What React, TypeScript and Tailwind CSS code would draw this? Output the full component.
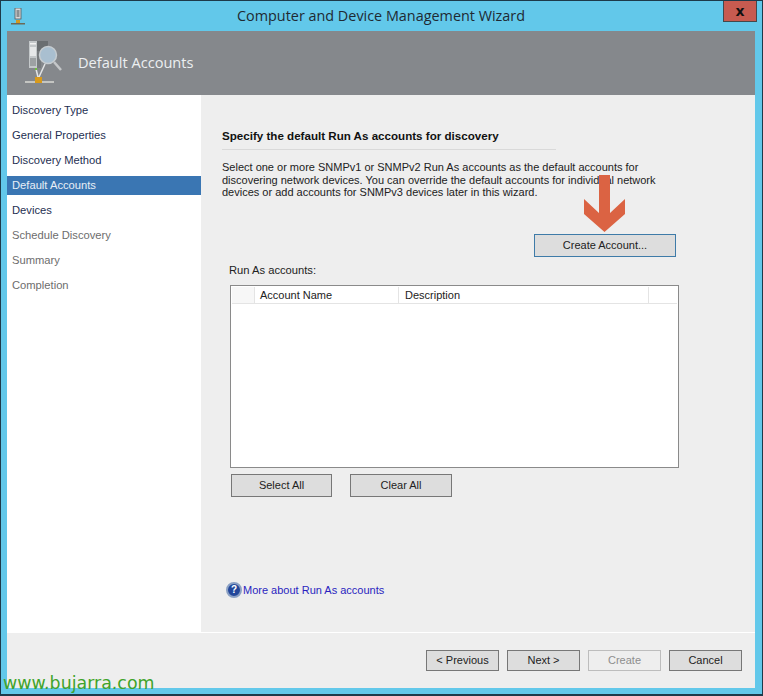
const steps = [
  { label: "Discovery Type", state: "done" },
  { label: "General Properties", state: "done" },
  { label: "Discovery Method", state: "done" },
  { label: "Default Accounts", state: "active" },
  { label: "Devices", state: "done" },
  { label: "Schedule Discovery", state: "todo" },
  { label: "Summary", state: "todo" },
  { label: "Completion", state: "todo" },
];

function stepClass(state: string) {
  if (state === "active") return "bg-[#3a76b3] text-[#e8eef6]";
  if (state === "todo") return "text-[#6d6d6d]";
  return "text-[#1e2f52]";
}

function WizardIcon({ small }: { small?: boolean }) {
  if (small) {
    return (
      <svg width="14" height="18" viewBox="0 0 14 18">
        <rect x="4" y="0" width="6" height="11" fill="#d8d8d8" stroke="#55585c" strokeWidth="0.8" />
        <rect x="5.5" y="2" width="3" height="7" fill="#8b8f92" />
        <rect x="5" y="12" width="4" height="3" fill="#d49a1e" />
        <rect x="0" y="15" width="14" height="1.5" fill="#6b6a58" />
      </svg>
    );
  }
  return (
    <svg width="38" height="44" viewBox="0 0 38 44">
      <rect x="12" y="0" width="11" height="10" fill="#6a6e71" />
      <rect x="4" y="0" width="8" height="27" fill="#c4c8ca" />
      <rect x="5" y="2" width="6" height="1.5" fill="#f2f2f2" />
      <rect x="5" y="6" width="6" height="9" fill="#e6e8e9" />
      <rect x="5" y="17" width="6" height="8" fill="#9da1a3" />
      <rect x="12" y="10" width="4" height="17" fill="#777b7e" />
      <path d="M29 21 L36 29" stroke="#c4c6c8" strokeWidth="2.5" />
      <circle cx="23" cy="14" r="8.5" fill="#a9bfd0" stroke="#c6ccd0" strokeWidth="1.5" />
      <path d="M11 28 L13 36 M14 36 L20 23" fill="none" stroke="#e2e4e5" strokeWidth="1.5" />
      <rect x="10" y="27" width="2" height="2" fill="#6fbf3f" />
      <rect x="0" y="40" width="29" height="2" fill="#c4c5c2" />
      <rect x="10" y="36" width="7" height="6" fill="#d89a1c" />
    </svg>
  );
}

function Btn({ children, className }: { children: string; className: string }) {
  return (
    <div className={`flex items-center justify-center border bg-[#dddddd] text-[11px] ${className}`}>
      {children}
    </div>
  );
}

export default function App() {
  return (
    <div className="relative h-[696px] w-[763px] overflow-hidden border border-b-2 border-[#1d3a4a] bg-[#62c8ea] font-['Liberation_Sans',sans-serif]">
      {/* title bar */}
      <div className="flex h-[30px] items-start">
        <div className="ml-[10px] mt-[7px]"><WizardIcon small /></div>
        <div className="flex-1 pl-[212px] pt-[5px] text-[14.4px] leading-5 text-[#1f2a33] font-['Open_Sans',sans-serif]">
          Computer and Device Management Wizard
        </div>
        <div className="mr-[5px] flex h-[21px] w-[34px] items-center justify-center border border-t-0 border-[#44484c] bg-[#c75b50] font-['DejaVu_Sans',sans-serif] text-[14px] font-bold leading-none text-[#111]">
          x
        </div>
      </div>

      <div className="ml-[6px] mr-[7px] flex h-[657px] flex-col">
        {/* header */}
        <div className="flex h-[64px] shrink-0 items-center bg-[#85888c]">
          <div className="ml-[18px]"><WizardIcon /></div>
          <div className="ml-[15px] font-['Open_Sans',sans-serif] text-[14.6px] text-[#eceff1]">Default Accounts</div>
        </div>

        {/* body */}
        <div className="flex h-[538px] shrink-0 bg-[#eeeeee]">
          <div className="w-[194px] shrink-0 bg-white pt-[3px]">
            {steps.map((s) => (
              <div key={s.label} className="flex h-[25px] items-center text-[11.2px]">
                <div className={`flex h-[19px] w-full items-center pl-[5px] ${stepClass(s.state)}`}>{s.label}</div>
              </div>
            ))}
          </div>

          <div className="flex flex-1 flex-col border-b border-white pl-[21px]">
            <div className="mt-[34px] w-[334px] border-b border-[#d9d9d9] pb-[6px] text-[11.6px] font-bold leading-[14px] text-[#111]">
              Specify the default Run As accounts for discovery
            </div>
            <p className="mt-[11px] w-[450px] text-[11px] leading-[12.5px] text-[#222]">
              Select one or more SNMPv1 or SNMPv2 Run As accounts as the default accounts for discovering network devices. You can override the default accounts for individual network devices or add accounts for SNMPv3 devices later in this wizard.
            </p>
            <div className="ml-[312px] mt-[35px]">
              <Btn className="h-[23px] w-[142px] border-[#3e7ba8] text-[#222]">Create Account...</Btn>
            </div>
            <div className="ml-[7px] mt-[6px] text-[11.2px] leading-[14px] text-[#222]">Run As accounts:</div>
            <div className="ml-[8px] mt-[8px] h-[183px] w-[449px] border border-[#8a8a8a] bg-white p-px">
              <div className="flex h-[17px] border-b border-[#e4e4e4] text-[11px] leading-[16px] text-[#222]">
                <div className="w-[23px] border-r border-[#e4e4e4] bg-[#f7f7f7]" />
                <div className="w-[144px] border-r border-[#e4e4e4] pl-[5px]">Account Name</div>
                <div className="w-[250px] border-r border-[#e4e4e4] pl-[6px]">Description</div>
              </div>
            </div>
            <div className="ml-[9px] mt-[6px] flex gap-[18px]">
              <Btn className="h-[23px] w-[101px] border-[#777] text-[#222]">Select All</Btn>
              <Btn className="h-[23px] w-[102px] border-[#777] text-[#222]">Clear All</Btn>
            </div>
            <div className="ml-[4px] mt-[85px] flex items-center text-[11px] text-[#2a1fc0]">
              <div className="flex h-[16px] w-[16px] items-center justify-center rounded-full border-2 border-[#8aa0c4] bg-[#23479a] text-[10px] font-bold leading-none text-white">?</div>
              <span className="ml-px">More about Run As accounts</span>
            </div>
          </div>
        </div>

        {/* footer */}
        <div className="flex flex-1 items-start justify-end gap-[8px] bg-[#eeeeee] pr-[13px] pt-[17px]">
          <Btn className="h-[21px] w-[73px] border-[#777] text-[#222]">&lt; Previous</Btn>
          <Btn className="h-[21px] w-[73px] border-[#777] text-[#222]">Next &gt;</Btn>
          <div className="flex h-[21px] w-[73px] items-center justify-center border border-[#bdbdbd] text-[11px] text-[#8d8d8d]">Create</div>
          <Btn className="h-[21px] w-[73px] border-[#777] text-[#222]">Cancel</Btn>
        </div>
      </div>

      {/* annotation arrow over the text */}
      <svg className="absolute left-[583px] top-[174px]" width="42" height="58" viewBox="0 0 42 58">
        <path d="M15 0 H26 V38 L41 24 V39 L20.5 57 L0 39 V24 L15 38 Z" fill="#db6343" />
      </svg>

      {/* watermark */}
      <div className="absolute left-[2px] top-[672px] font-['DejaVu_Sans',sans-serif] text-[17.4px] leading-5 text-[#3fa32a]">
        www.bujarra.com
      </div>
    </div>
  );
}
